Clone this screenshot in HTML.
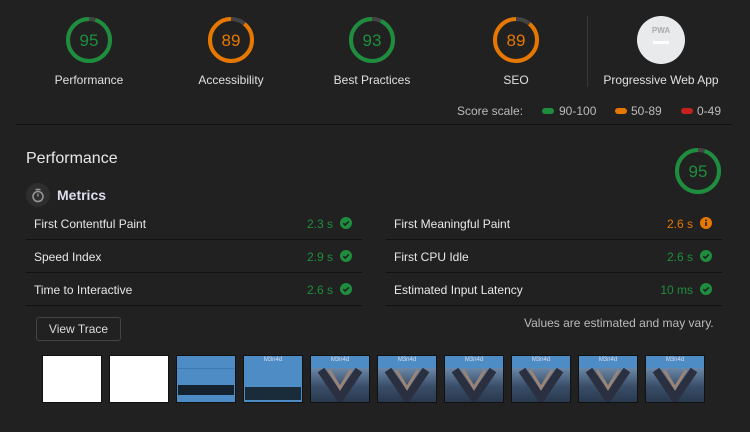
<!DOCTYPE html>
<html><head><meta charset="utf-8"><style>
*{margin:0;padding:0;box-sizing:border-box}
body{width:750px;height:432px;background:#212121;font-family:"Liberation Sans",Arial,sans-serif;color:#e0e0e0;position:relative;overflow:hidden}
.a{position:absolute}
.lbl{font-size:12px;color:#e0e0e0;text-align:center;width:160px;top:73px}
.g{position:absolute}
.row{position:absolute;height:33px;border-bottom:1px solid #111;font-size:12px}
.row .t{position:absolute;left:8px;top:10px;color:#e8e8e8}
.row .v{position:absolute;right:29px;top:10px}
.row svg{position:absolute;right:10px;top:10px}
.fr{position:absolute;top:355px;width:60px;height:48px;border:1px solid #111}
.bl{background:#4d8cc4}
.bd{background:linear-gradient(#4d8cc4 0,#4d8cc4 12px,#6a88a8 12px,#3b4f6a 30px,#26364a 48px)}
</style></head><body>
<svg class="g" width="750" height="100" style="left:0;top:0">
<g fill="none" stroke-width="4">
<circle cx="89" cy="40" r="21" stroke="#444"/><circle cx="89" cy="40" r="21" stroke="#1e8e3e" stroke-dasharray="125.6 132" transform="rotate(-90 89 40)" stroke-dashoffset="-6.6"/>
<circle cx="231" cy="40" r="21" stroke="#444"/><circle cx="231" cy="40" r="21" stroke="#e67700" stroke-dasharray="117.4 132" transform="rotate(-90 231 40)" stroke-dashoffset="-14.5"/>
<circle cx="372" cy="40" r="21" stroke="#444"/><circle cx="372" cy="40" r="21" stroke="#1e8e3e" stroke-dasharray="122.7 132" transform="rotate(-90 372 40)" stroke-dashoffset="-9.2"/>
<circle cx="516" cy="40" r="21" stroke="#444"/><circle cx="516" cy="40" r="21" stroke="#e67700" stroke-dasharray="117.4 132" transform="rotate(-90 516 40)" stroke-dashoffset="-14.5"/>
</g>
<g font-family="Liberation Sans,Arial,sans-serif" font-size="17" text-anchor="middle">
<text x="89" y="46" fill="#1e8e3e">95</text><text x="231" y="46" fill="#e67700">89</text>
<text x="372" y="46" fill="#1e8e3e">93</text><text x="516" y="46" fill="#e67700">89</text>
</g>
<circle cx="661" cy="40" r="24" fill="#e8eaec"/>
<text x="661" y="33" font-family="Liberation Sans,Arial,sans-serif" font-size="8" font-weight="bold" fill="#aaa" text-anchor="middle">PWA</text>
<rect x="653" y="41" width="16" height="3" fill="#fff"/>
<line x1="587.5" y1="16" x2="587.5" y2="87" stroke="#3a3a3a"/>
</svg>
<div class="a lbl" style="left:9px">Performance</div>
<div class="a lbl" style="left:151px">Accessibility</div>
<div class="a lbl" style="left:292px">Best Practices</div>
<div class="a lbl" style="left:436px">SEO</div>
<div class="a lbl" style="left:581px">Progressive Web App</div>
<div class="a" style="left:457px;top:104px;font-size:12px;color:#bbb">Score scale:</div>
<div class="a" style="left:542px;top:108px;width:12px;height:6px;border-radius:3px;background:#1e8e3e"></div>
<div class="a" style="left:559px;top:104px;font-size:12px;color:#bbb">90-100</div>
<div class="a" style="left:615px;top:108px;width:12px;height:6px;border-radius:3px;background:#e67700"></div>
<div class="a" style="left:631px;top:104px;font-size:12px;color:#bbb">50-89</div>
<div class="a" style="left:681px;top:108px;width:12px;height:6px;border-radius:3px;background:#c5221f"></div>
<div class="a" style="left:697px;top:104px;font-size:12px;color:#bbb">0-49</div>
<div class="a" style="left:16px;top:124px;width:716px;height:1px;background:#111"></div>

<div class="a" style="left:26px;top:150px;font-size:16px;color:#e8e8e8">Performance</div>
<svg class="g" width="60" height="60" style="left:668px;top:141px">
<circle cx="30" cy="30" r="21" fill="none" stroke="#444" stroke-width="4"/>
<circle cx="30" cy="30" r="21" fill="none" stroke="#1e8e3e" stroke-width="4" stroke-dasharray="125.6 132" transform="rotate(-90 30 30)" stroke-dashoffset="-6.6"/>
<text x="30" y="36" font-family="Liberation Sans,Arial,sans-serif" font-size="17" fill="#1e8e3e" text-anchor="middle">95</text>
</svg>
<svg class="g" width="24" height="24" style="left:26px;top:183px">
<circle cx="12" cy="12" r="12" fill="#2e2e2e"/>
<circle cx="12" cy="13.5" r="5" fill="none" stroke="#999" stroke-width="1.5"/>
<line x1="9.5" y1="6.5" x2="14.5" y2="6.5" stroke="#999" stroke-width="1.5"/>
<line x1="12" y1="13.5" x2="12" y2="10.5" stroke="#999" stroke-width="1.3"/>
</svg>
<div class="a" style="left:57px;top:187px;font-size:14px;font-weight:bold;color:#dde">Metrics</div>

<div class="row" style="left:26px;top:207px;width:336px"><span class="t">First Contentful Paint</span><span class="v" style="color:#1e8e3e">2.3 s</span><svg width="12" height="12"><circle cx="6" cy="6" r="6" fill="#1e8e3e"/><path d="M3.3 6.2l1.9 1.8 3.6-3.6" stroke="#212121" stroke-width="1.6" fill="none"/></svg></div>
<div class="row" style="left:26px;top:240px;width:336px"><span class="t">Speed Index</span><span class="v" style="color:#1e8e3e">2.9 s</span><svg width="12" height="12"><circle cx="6" cy="6" r="6" fill="#1e8e3e"/><path d="M3.3 6.2l1.9 1.8 3.6-3.6" stroke="#212121" stroke-width="1.6" fill="none"/></svg></div>
<div class="row" style="left:26px;top:273px;width:336px"><span class="t">Time to Interactive</span><span class="v" style="color:#1e8e3e">2.6 s</span><svg width="12" height="12"><circle cx="6" cy="6" r="6" fill="#1e8e3e"/><path d="M3.3 6.2l1.9 1.8 3.6-3.6" stroke="#212121" stroke-width="1.6" fill="none"/></svg></div>
<div class="row" style="left:386px;top:207px;width:336px"><span class="t">First Meaningful Paint</span><span class="v" style="color:#e67700">2.6 s</span><svg width="12" height="12"><circle cx="6" cy="6" r="6" fill="#e67700"/><rect x="5.2" y="5" width="1.6" height="4" fill="#212121"/><rect x="5.2" y="2.6" width="1.6" height="1.6" fill="#212121"/></svg></div>
<div class="row" style="left:386px;top:240px;width:336px"><span class="t">First CPU Idle</span><span class="v" style="color:#1e8e3e">2.6 s</span><svg width="12" height="12"><circle cx="6" cy="6" r="6" fill="#1e8e3e"/><path d="M3.3 6.2l1.9 1.8 3.6-3.6" stroke="#212121" stroke-width="1.6" fill="none"/></svg></div>
<div class="row" style="left:386px;top:273px;width:336px"><span class="t">Estimated Input Latency</span><span class="v" style="color:#1e8e3e">10 ms</span><svg width="12" height="12"><circle cx="6" cy="6" r="6" fill="#1e8e3e"/><path d="M3.3 6.2l1.9 1.8 3.6-3.6" stroke="#212121" stroke-width="1.6" fill="none"/></svg></div>

<div class="a" style="left:36px;top:317px;width:85px;height:24px;border:1px solid #444;border-radius:3px;font-size:12px;color:#ddd;text-align:center;line-height:22px">View Trace</div>
<div class="a" style="left:524px;top:316px;font-size:12px;color:#bbb">Values are estimated and may vary.</div>

<div class="fr" style="left:42px;background:#fff"></div>
<div class="fr" style="left:109px;background:#fff"></div>
<div class="fr bl" style="left:176px"><div class="a" style="left:0;top:12px;width:58px;height:1px;background:#3f7ab0"></div><div class="a" style="left:1px;top:29px;width:56px;height:10px;background:#14232f"></div></div>
<div class="fr bl" style="left:243px"><div class="a" style="left:0;top:1px;width:58px;text-align:center;font-size:6px;color:#dde">M3n4d</div><div class="a" style="left:1px;top:31px;width:56px;height:13px;background:#1a2b3a"></div></div>
<div class="fr bd" style="left:310px"><div class="a" style="left:0;top:1px;width:58px;text-align:center;font-size:6px;color:#dde">M3n4d</div><svg class="a" width="58" height="34" style="left:0;top:12px"><path d="M10 2L29 30L48 2" stroke="#2a3040" stroke-width="8" fill="none"/><path d="M18 2L29 20L40 2" stroke="#9a8478" stroke-width="3" fill="none"/></svg></div>
<div class="fr bd" style="left:377px"><div class="a" style="left:0;top:1px;width:58px;text-align:center;font-size:6px;color:#dde">M3n4d</div><svg class="a" width="58" height="34" style="left:0;top:12px"><path d="M10 2L29 30L48 2" stroke="#2a3040" stroke-width="8" fill="none"/><path d="M18 2L29 20L40 2" stroke="#9a8478" stroke-width="3" fill="none"/></svg></div>
<div class="fr bd" style="left:444px"><div class="a" style="left:0;top:1px;width:58px;text-align:center;font-size:6px;color:#dde">M3n4d</div><svg class="a" width="58" height="34" style="left:0;top:12px"><path d="M10 2L29 30L48 2" stroke="#2a3040" stroke-width="8" fill="none"/><path d="M18 2L29 20L40 2" stroke="#9a8478" stroke-width="3" fill="none"/></svg></div>
<div class="fr bd" style="left:511px"><div class="a" style="left:0;top:1px;width:58px;text-align:center;font-size:6px;color:#dde">M3n4d</div><svg class="a" width="58" height="34" style="left:0;top:12px"><path d="M10 2L29 30L48 2" stroke="#2a3040" stroke-width="8" fill="none"/><path d="M18 2L29 20L40 2" stroke="#9a8478" stroke-width="3" fill="none"/></svg></div>
<div class="fr bd" style="left:578px"><div class="a" style="left:0;top:1px;width:58px;text-align:center;font-size:6px;color:#dde">M3n4d</div><svg class="a" width="58" height="34" style="left:0;top:12px"><path d="M10 2L29 30L48 2" stroke="#2a3040" stroke-width="8" fill="none"/><path d="M18 2L29 20L40 2" stroke="#9a8478" stroke-width="3" fill="none"/></svg></div>
<div class="fr bd" style="left:645px"><div class="a" style="left:0;top:1px;width:58px;text-align:center;font-size:6px;color:#dde">M3n4d</div><svg class="a" width="58" height="34" style="left:0;top:12px"><path d="M10 2L29 30L48 2" stroke="#2a3040" stroke-width="8" fill="none"/><path d="M18 2L29 20L40 2" stroke="#9a8478" stroke-width="3" fill="none"/></svg></div>
</body></html>
